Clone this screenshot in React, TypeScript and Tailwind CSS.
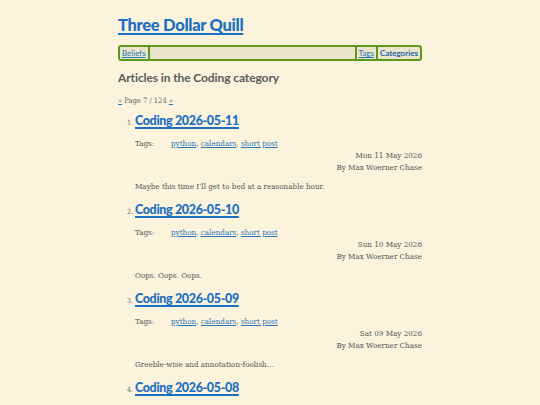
import React from "react";

const head = { fontFamily: 'Lato, "Open Sans", sans-serif' };
const serif = { fontFamily: '"DejaVu Serif Condensed", "DejaVu Serif", serif' };

const posts = [
  { n: 1, t: "Coding 2026-05-11", d: "Mon 11 May 2026", s: "Maybe this time I\u2019ll get to bed at a reasonable hour." },
  { n: 2, t: "Coding 2026-05-10", d: "Sun 10 May 2026", s: "Oops. Oops. Oops." },
  { n: 3, t: "Coding 2026-05-09", d: "Sat 09 May 2026", s: "Greeble-wise and annotation-foolish\u2026" },
  { n: 4, t: "Coding 2026-05-08", d: "Fri 08 May 2026", s: "" },
];

export default function App() {
  return (
    <div className="h-[405px] w-[540px] bg-[#fbf3dc] overflow-hidden text-[#555]">
      <div className="ml-[118px] w-[304px] pt-[13px]">
        <h1 style={head} className="text-[16.5px] leading-[24px] font-black tracking-[-0.3px] text-[#1a6fc4] underline decoration-[1.5px] underline-offset-2">
          Three Dollar Quill
        </h1>
        <nav
          style={head}
          className="mt-[8px] flex h-[16px] items-center rounded-[3px] border-2 border-[#5c9a1c] bg-[#ece4cd] text-[8px] leading-none"
        >
          <a className="px-[2px] text-[#2a74b8] underline">Beliefs</a>
          <span className="h-full w-[2px] bg-[#5c9a1c]" />
          <span className="flex-1" />
          <span className="h-full w-[2px] bg-[#5c9a1c]" />
          <a className="px-[2px] text-[#2a74b8] underline">Tags</a>
          <span className="h-full w-[2px] bg-[#5c9a1c]" />
          <a className="px-[2px] font-bold text-[#1a5fa8]">Categories</a>
        </nav>
        <h2 style={head} className="mt-[8px] text-[12px] font-bold leading-[18px] tracking-[-0.1px] text-[#5a5a5a]">
          Articles in the Coding category
        </h2>
        <div style={serif} className="mt-[9px] text-[7.5px] leading-[10px] text-[#666]">
          <a className="text-[#2a74b8] underline">&laquo;</a> Page 7 / 124{" "}
          <a className="text-[#2a74b8] underline">&raquo;</a>
        </div>
        <ol className="mt-[6px]">
          {posts.map((p) => (
            <li key={p.n} className="h-[89px]">
              <div className="flex items-baseline">
                <span style={serif} className="w-[17px] pl-[9px] text-[7px] text-[#666]">
                  {p.n}.
                </span>
                <a style={head} className="text-[12.5px] font-black leading-[18px] tracking-[-0.35px] text-[#1a6fc4] underline decoration-[1.5px] underline-offset-2">
                  {p.t}
                </a>
              </div>
              <div style={serif} className="ml-[17px] text-[8px] leading-[12px] text-[#555]">
                <div className="mt-[8px] flex">
                  <span className="w-[36px]">Tags:</span>
                  <span>
                    <a className="text-[#2a74b8] underline">python</a>,{" "}
                    <a className="text-[#2a74b8] underline">calendars</a>,{" "}
                    <a className="text-[#2a74b8] underline">short post</a>
                  </span>
                </div>
                <div className="text-right">{p.d}</div>
                <div className="text-right">By Max Woerner Chase</div>
                <p className="mt-[7px]">{p.s}</p>
              </div>
            </li>
          ))}
        </ol>
      </div>
    </div>
  );
}
